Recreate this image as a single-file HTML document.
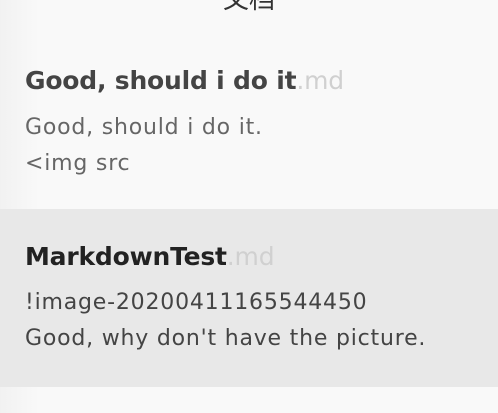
<!DOCTYPE html>
<html><head><style>
body{margin:0;width:498px;height:413px;overflow:hidden;background:#f9f9f9;font-family:"DejaVu Sans","Noto Sans CJK SC",sans-serif;position:relative}
.top{position:absolute;left:0;width:498px;text-align:center;top:-21px;font-size:26px;color:#333;font-family:"Noto Sans CJK SC",sans-serif}
.shade{position:absolute;left:0;top:0;width:40px;height:413px;background:linear-gradient(to right,rgba(0,0,0,0.03),rgba(0,0,0,0))}
.sel{position:absolute;left:0;top:209px;width:498px;height:178px;background:#e8e8e8}
.t{position:absolute;left:25px;font-size:25px;font-weight:bold;white-space:nowrap;letter-spacing:-0.2px}
.t span{font-weight:normal;color:#d0d0d0}
.b{position:absolute;left:25px;font-size:22px;color:#555;line-height:36px;white-space:nowrap;letter-spacing:0.8px}
</style></head><body>
<div class="shade"></div>
<div class="top">文档</div>
<div class="t" style="top:66px;color:#444">Good, should i do it<span>.md</span></div>
<div class="b" style="top:110px;color:#666">Good, should i do it.<br>&lt;img src</div>
<div class="sel"></div>
<div class="t" style="top:242px;color:#222">MarkdownTest<span>.md</span></div>
<div class="b" style="top:285px;color:#444">!image-20200411165544450<br>Good, why don't have the picture.</div>
</body></html>
